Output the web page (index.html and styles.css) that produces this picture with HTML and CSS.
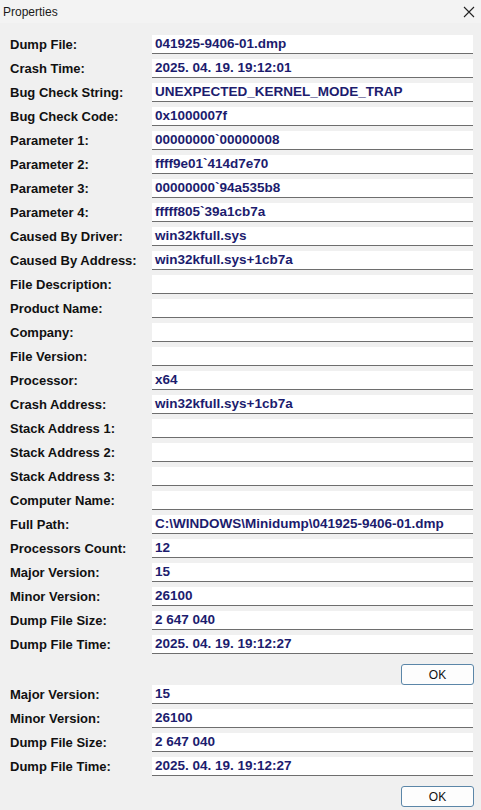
FILE: index.html
```html
<!DOCTYPE html>
<html>
<head>
<meta charset="utf-8">
<link rel="stylesheet" href="styles.css">
</head>
<body>
<div class="window">
  <div class="titlebar">
    <span class="title">Properties</span>
    <svg class="close" width="12" height="12" viewBox="0 0 12 12"><path d="M1 1 L11 11 M11 1 L1 11" stroke="#222" stroke-width="1.1" fill="none"/></svg>
  </div>
  <div class="content">
    <div class="rows">
      <div class="row"><span class="label">Dump File:</span><span class="field">041925-9406-01.dmp</span></div>
      <div class="row"><span class="label">Crash Time:</span><span class="field">2025. 04. 19. 19:12:01</span></div>
      <div class="row"><span class="label">Bug Check String:</span><span class="field">UNEXPECTED_KERNEL_MODE_TRAP</span></div>
      <div class="row"><span class="label">Bug Check Code:</span><span class="field">0x1000007f</span></div>
      <div class="row"><span class="label">Parameter 1:</span><span class="field">00000000`00000008</span></div>
      <div class="row"><span class="label">Parameter 2:</span><span class="field">ffff9e01`414d7e70</span></div>
      <div class="row"><span class="label">Parameter 3:</span><span class="field">00000000`94a535b8</span></div>
      <div class="row"><span class="label">Parameter 4:</span><span class="field">fffff805`39a1cb7a</span></div>
      <div class="row"><span class="label">Caused By Driver:</span><span class="field">win32kfull.sys</span></div>
      <div class="row"><span class="label">Caused By Address:</span><span class="field">win32kfull.sys+1cb7a</span></div>
      <div class="row"><span class="label">File Description:</span><span class="field"></span></div>
      <div class="row"><span class="label">Product Name:</span><span class="field"></span></div>
      <div class="row"><span class="label">Company:</span><span class="field"></span></div>
      <div class="row"><span class="label">File Version:</span><span class="field"></span></div>
      <div class="row"><span class="label">Processor:</span><span class="field">x64</span></div>
      <div class="row"><span class="label">Crash Address:</span><span class="field">win32kfull.sys+1cb7a</span></div>
      <div class="row"><span class="label">Stack Address 1:</span><span class="field"></span></div>
      <div class="row"><span class="label">Stack Address 2:</span><span class="field"></span></div>
      <div class="row"><span class="label">Stack Address 3:</span><span class="field"></span></div>
      <div class="row"><span class="label">Computer Name:</span><span class="field"></span></div>
      <div class="row"><span class="label">Full Path:</span><span class="field">C:\WINDOWS\Minidump\041925-9406-01.dmp</span></div>
      <div class="row"><span class="label">Processors Count:</span><span class="field">12</span></div>
      <div class="row"><span class="label">Major Version:</span><span class="field">15</span></div>
      <div class="row"><span class="label">Minor Version:</span><span class="field">26100</span></div>
      <div class="row"><span class="label">Dump File Size:</span><span class="field">2 647 040</span></div>
      <div class="row"><span class="label">Dump File Time:</span><span class="field">2025. 04. 19. 19:12:27</span></div>
    </div>
    <div class="actions"><button class="btn">OK</button></div>
    <div class="rows">
      <div class="row"><span class="label">Major Version:</span><span class="field">15</span></div>
      <div class="row"><span class="label">Minor Version:</span><span class="field">26100</span></div>
      <div class="row"><span class="label">Dump File Size:</span><span class="field">2 647 040</span></div>
      <div class="row"><span class="label">Dump File Time:</span><span class="field">2025. 04. 19. 19:12:27</span></div>
    </div>
    <div class="actions"><button class="btn">OK</button></div>
  </div>
</div>
</body>
</html>
```
FILE: styles.css
```css
html, body {
  margin: 0;
  padding: 0;
  background: #f0f0f0;
}
.window {
  width: 481px;
  height: 810px;
  background: #f0f0f0;
  overflow: hidden;
}
.titlebar {
  height: 23px;
  display: flex;
  align-items: center;
  justify-content: space-between;
  padding: 0 6px 0 3px;
  background: #f3f3f3;
}
.title {
  font-family: "Liberation Sans", Arial, sans-serif;
  font-size: 12px;
  color: #1a1a1a;
}
.close {
  display: block;
}
.content {
  padding-top: 12px;
}
.rows {
  display: flex;
  flex-direction: column;
  gap: 5px;
}
.row {
  display: flex;
  align-items: stretch;
  height: 19px;
}
.label {
  width: 152px;
  padding-left: 10px;
  box-sizing: border-box;
  font-family: "Liberation Sans", Arial, sans-serif;
  font-weight: bold;
  font-size: 13px;
  color: #111;
  line-height: 19px;
}
.field {
  width: 321px;
  box-sizing: border-box;
  background: #ffffff;
  border-bottom: 1px solid #6e6e6e;
  padding-left: 3px;
  font-family: "Liberation Sans", Arial, sans-serif;
  font-weight: bold;
  font-size: 13.5px;
  color: #1c1c6e;
  line-height: 18px;
  white-space: nowrap;
  overflow: hidden;
}
.actions {
  display: flex;
  justify-content: flex-end;
  padding: 10px 7px 0 0;
}
.btn {
  width: 73px;
  height: 21px;
  border: 1px solid #5b86a8;
  border-radius: 3px;
  background: #fdfdfd;
  font-family: "Liberation Sans", Arial, sans-serif;
  font-size: 12px;
  color: #111;
  padding: 0;
  margin: 0;
}
```
